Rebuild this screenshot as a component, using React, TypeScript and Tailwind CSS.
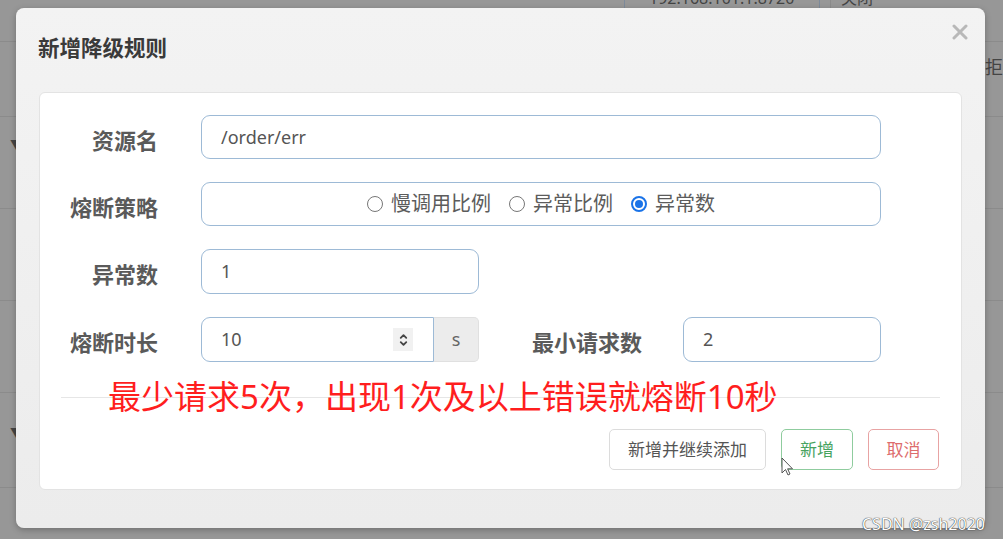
import { ChevronDown, ChevronUp } from 'lucide-react'

const font = { fontFamily: '"Noto Sans", "Noto Sans CJK SC", sans-serif' }

function Radio({ label, checked = false }: { label: string; checked?: boolean }) {
  return (
    <label className="flex items-center gap-[8px]">
      {checked ? (
        <span className="flex h-[16px] w-[16px] items-center justify-center rounded-full border-[2px] border-[#1a73e8] bg-white">
          <span className="h-[8px] w-[8px] rounded-full bg-[#1a73e8]" />
        </span>
      ) : (
        <span className="h-[16px] w-[16px] rounded-full border-[1.5px] border-[#777] bg-white" />
      )}
      <span>{label}</span>
    </label>
  )
}

function Label({ children, w = 'w-[118px]' }: { children: React.ReactNode; w?: string }) {
  return (
    <div className={`${w} shrink-0 pt-[6px] text-right text-[22px] font-bold text-[#5a5a5a]`}>{children}</div>
  )
}

export default function App() {
  return (
    <div className="relative h-[539px] w-[1003px] overflow-hidden bg-[#979797]" style={font}>
      {/* page behind the modal */}
      <div className="flex h-full flex-col">
        <div className="flex h-[42px] border-b border-[#8b8b8b]">
          <div className="w-[624px]" />
          <div className="-mt-[14px] flex h-[30px] w-[196px] items-start border-x border-[#7d8a9a] pl-[24px] text-[16px] text-[#444]">
            192.168.101.1:8720
          </div>
          <div className="w-[10px]" />
          <div className="-mt-[14px] h-[30px] flex-1 border-l border-[#8b8b8b] pl-[10px] text-[16px] text-[#444]">
            关闭
          </div>
        </div>
        <div className="flex h-[75px] justify-end border-b border-[#8b8b8b] pt-[12px] text-[18px] text-[#444]">
          拒
        </div>
        <div className="h-[92px] border-b border-[#8b8b8b] pl-[10px] pt-[18px] text-[13px] text-[#444]">▼</div>
        <div className="h-[92px] border-b border-[#8b8b8b]" />
        <div className="h-[92px] border-b border-[#8b8b8b]" />
        <div className="h-[95px] border-b border-[#8b8b8b] pl-[10px] pt-[30px] text-[13px] text-[#444]">▼</div>
        <div className="flex flex-1 items-start pt-[20px] text-[17px] text-[#444]">
          <span className="ml-[48px] w-[515px]">/order/err</span>
          <span className="w-[95px]">0</span>
          <span className="w-[80px]">0</span>
          <span className="w-[73px]">0</span>
          <span>0</span>
        </div>
      </div>

      {/* modal */}
      <div className="absolute left-[16px] top-[8px] flex h-[520px] w-[969px] flex-col rounded-[8px] bg-gradient-to-b from-[#f3f3f3] to-[#ececec] shadow-[0_2px_6px_rgba(0,0,0,0.25)]">
        <div className="flex h-[84px] items-start justify-between pl-[22px] pr-[17px]">
          <h3 className="mt-[24px] text-[21.5px] font-bold text-[#3a3a3a]">新增降级规则</h3>
          <svg className="mt-[16px]" width="16" height="16" viewBox="0 0 16 16">
            <path d="M2 2 L14 14 M14 2 L2 14" stroke="#b8b8b8" strokeWidth="3" strokeLinecap="round" />
          </svg>
        </div>

        <div className="relative mx-[23px] h-[398px] rounded-[6px] border border-[#e3e3e3] bg-white">
          <div className="flex flex-col gap-[23px] pt-[22px]">
            <div className="flex items-center gap-[43px]">
              <Label>资源名</Label>
              <div className="flex h-[44px] w-[680px] items-center rounded-[9px] border border-[#9dbad6] px-[19px] text-[18px] text-[#555]">
                /order/err
              </div>
            </div>
            <div className="flex items-center gap-[43px]">
              <Label>熔断策略</Label>
              <div className="flex h-[44px] w-[680px] items-center justify-center gap-[18px] rounded-[9px] border border-[#9dbad6] text-[20px] text-[#5c5c5c]">
                <Radio label="慢调用比例" />
                <Radio label="异常比例" />
                <Radio label="异常数" checked />
              </div>
            </div>
            <div className="flex items-center gap-[43px]">
              <Label>异常数</Label>
              <div className="flex h-[45px] w-[278px] items-center rounded-[9px] border border-[#9dbad6] px-[19px] text-[18px] text-[#555]">
                1
              </div>
            </div>
            <div className="flex items-center">
              <Label>熔断时长</Label>
              <div className="ml-[43px] flex h-[45px] w-[278px]">
                <div className="flex flex-1 items-center justify-between rounded-l-[9px] border border-[#9dbad6] pl-[19px] pr-[20px] text-[18px] text-[#555]">
                  <span>10</span>
                  <span className="flex h-[23px] w-[20px] flex-col items-center justify-center bg-[#f1f1f1] text-[#444]">
                    <ChevronUp className="-mb-[4px] h-[11px] w-[11px]" strokeWidth={4} />
                    <ChevronDown className="h-[11px] w-[11px]" strokeWidth={4} />
                  </span>
                </div>
                <div className="flex w-[45px] items-center justify-center rounded-r-[5px] border border-l-0 border-[#e0e0e0] bg-[#ececec] text-[18px] text-[#666]">
                  s
                </div>
              </div>
              <Label w="w-[163px]">最小请求数</Label>
              <div className="ml-[41px] flex h-[45px] w-[198px] items-center rounded-[9px] border border-[#9dbad6] px-[19px] text-[18px] text-[#555]">
                2
              </div>
            </div>
          </div>

          <div className="mx-[21px] mt-[35px] border-t border-[#e6e6e6]" />

          <div className="mt-[31px] flex justify-end gap-[15px] pr-[22px] text-[17px]">
            <button className="h-[41px] w-[157px] rounded-[5px] border border-[#dcdcdc] bg-white text-[#555]">
              新增并继续添加
            </button>
            <button className="h-[41px] w-[72px] rounded-[5px] border border-[#8fcc9e] bg-white text-[#47a35f]">
              新增
            </button>
            <button className="h-[41px] w-[71px] rounded-[5px] border border-[#e8a3a3] bg-white text-[#dd6c6c]">
              取消
            </button>
          </div>

          {/* annotation overlaid on the screenshot */}
          <div className="absolute left-[68px] top-[287px] text-[33px] leading-none text-[#ff1e1e]">
            最少请求5次，出现1次及以上错误就熔断10秒
          </div>
        </div>
      </div>

      {/* mouse cursor */}
      <svg className="absolute left-[781px] top-[457px]" width="14" height="20" viewBox="0 0 14 20">
        <path d="M1 1 L1 16 L4.5 12.5 L7 18 L9 17 L6.6 11.8 L11.5 11.8 Z" fill="#fff" stroke="#555" strokeWidth="1" />
      </svg>

      {/* watermark */}
      <div
        className="absolute left-[862px] top-[513px] text-[16px] leading-[22px] text-white"
        style={{ textShadow: '0 0 1px #333, 0 0 1px #333' }}
      >
        CSDN @zsh2020
      </div>
    </div>
  )
}
